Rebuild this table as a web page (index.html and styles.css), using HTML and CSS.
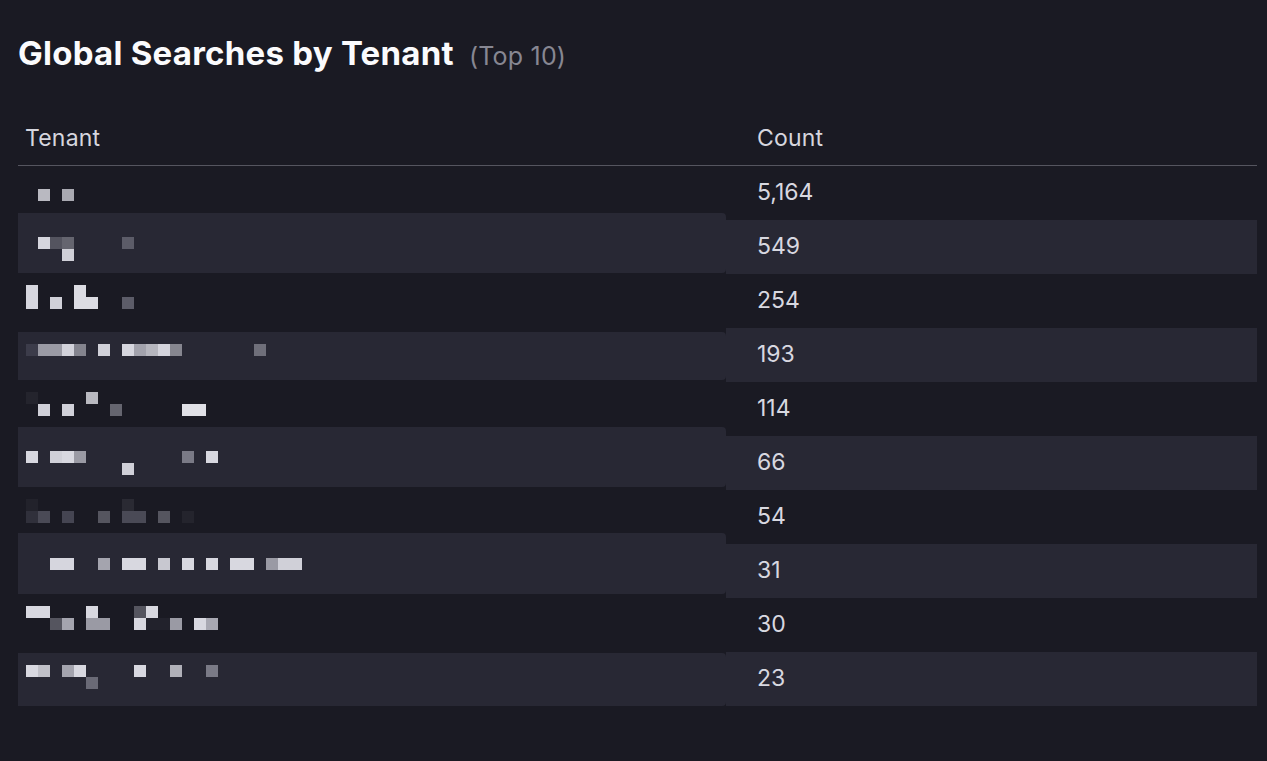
FILE: index.html
```html
<!DOCTYPE html>
<html lang="en">
<head>
<meta charset="utf-8">
<title>Global Searches by Tenant</title>
<link rel="stylesheet" href="styles.css">
</head>
<body>
<main class="panel">
  <h1 class="title">Global Searches by Tenant <span class="sub">(Top 10)</span></h1>
  <div class="table">
    <div class="col col-tenant">
      <div class="th">Tenant</div>
      <div class="td t1"><svg class="pix" width="320" height="47" viewBox="0 0 320 47"><rect x="12" y="23" width="12" height="12" fill="#b9b9c1"/><rect x="36" y="23" width="12" height="12" fill="#a9a9b1"/></svg></div>
      <div class="td t2 alt"><svg class="pix" width="320" height="60" viewBox="0 0 320 60"><rect x="12" y="24" width="12" height="12" fill="#d6d6de"/><rect x="24" y="24" width="12" height="12" fill="#54545f"/><rect x="36" y="24" width="12" height="12" fill="#65656f"/><rect x="96" y="24" width="12" height="12" fill="#5c5c68"/><rect x="36" y="36" width="12" height="12" fill="#d0d0d8"/></svg></div>
      <div class="td t3"><svg class="pix" width="320" height="59" viewBox="0 0 320 59"><rect x="0" y="12" width="12" height="24" fill="#d6d6de"/><rect x="24" y="24" width="12" height="12" fill="#d0d0d8"/><rect x="48" y="12" width="12" height="24" fill="#dcdce3"/><rect x="60" y="24" width="12" height="12" fill="#dcdce3"/><rect x="96" y="24" width="12" height="12" fill="#5c5c68"/></svg></div>
      <div class="td t4 alt"><svg class="pix" width="320" height="48" viewBox="0 0 320 48"><rect x="0" y="12" width="12" height="12" fill="#3c3c4a"/><rect x="12" y="12" width="24" height="12" fill="#9a9aa4"/><rect x="36" y="12" width="12" height="12" fill="#d2d2da"/><rect x="48" y="12" width="12" height="12" fill="#84848e"/><rect x="72" y="12" width="12" height="12" fill="#d0d0d8"/><rect x="96" y="12" width="12" height="12" fill="#d6d6de"/><rect x="108" y="12" width="12" height="12" fill="#a2a2ac"/><rect x="120" y="12" width="12" height="12" fill="#b6b6be"/><rect x="132" y="12" width="12" height="12" fill="#d4d4dc"/><rect x="144" y="12" width="12" height="12" fill="#86868f"/><rect x="228" y="12" width="12" height="12" fill="#6f6f7a"/></svg></div>
      <div class="td t5"><svg class="pix" width="320" height="47" viewBox="0 0 320 47"><rect x="0" y="12" width="12" height="12" fill="#24242d"/><rect x="60" y="12" width="12" height="12" fill="#b9b9c0"/><rect x="12" y="24" width="12" height="12" fill="#d0d0d8"/><rect x="36" y="24" width="12" height="12" fill="#d0d0d8"/><rect x="84" y="24" width="12" height="12" fill="#65656f"/><rect x="156" y="24" width="24" height="12" fill="#e0e0e6"/></svg></div>
      <div class="td t6 alt"><svg class="pix" width="320" height="60" viewBox="0 0 320 60"><rect x="0" y="24" width="12" height="12" fill="#d8d8e0"/><rect x="24" y="24" width="12" height="12" fill="#d0d0d8"/><rect x="36" y="24" width="12" height="12" fill="#d8d8e0"/><rect x="48" y="24" width="12" height="12" fill="#9a9aa4"/><rect x="156" y="24" width="12" height="12" fill="#7a7a86"/><rect x="180" y="24" width="12" height="12" fill="#d8d8e0"/><rect x="96" y="36" width="12" height="12" fill="#d0d0d8"/></svg></div>
      <div class="td t7"><svg class="pix" width="320" height="46" viewBox="0 0 320 46"><rect x="0" y="12" width="12" height="12" fill="#22222b"/><rect x="96" y="12" width="12" height="12" fill="#2a2a33"/><rect x="0" y="24" width="12" height="12" fill="#30303b"/><rect x="12" y="24" width="12" height="12" fill="#4a4a56"/><rect x="36" y="24" width="12" height="12" fill="#454552"/><rect x="72" y="24" width="12" height="12" fill="#55555f"/><rect x="96" y="24" width="24" height="12" fill="#4a4a56"/><rect x="132" y="24" width="12" height="12" fill="#55555f"/><rect x="156" y="24" width="12" height="12" fill="#24242d"/></svg></div>
      <div class="td t8 alt"><svg class="pix" width="320" height="61" viewBox="0 0 320 61"><rect x="24" y="25" width="24" height="12" fill="#d6d6de"/><rect x="72" y="25" width="12" height="12" fill="#a4a4ae"/><rect x="96" y="25" width="24" height="12" fill="#d8d8e0"/><rect x="132" y="25" width="12" height="12" fill="#c8c8d0"/><rect x="156" y="25" width="12" height="12" fill="#d8d8e0"/><rect x="180" y="25" width="12" height="12" fill="#d8d8e0"/><rect x="204" y="25" width="24" height="12" fill="#d8d8e0"/><rect x="240" y="25" width="12" height="12" fill="#9a9aa4"/><rect x="252" y="25" width="24" height="12" fill="#d0d0d8"/></svg></div>
      <div class="td t9"><svg class="pix" width="320" height="59" viewBox="0 0 320 59"><rect x="0" y="12" width="24" height="12" fill="#d8d8e0"/><rect x="60" y="12" width="12" height="12" fill="#d8d8e0"/><rect x="108" y="12" width="12" height="12" fill="#55555f"/><rect x="120" y="12" width="12" height="12" fill="#d8d8e0"/><rect x="24" y="24" width="12" height="12" fill="#55555f"/><rect x="36" y="24" width="12" height="12" fill="#a4a4ae"/><rect x="60" y="24" width="24" height="12" fill="#9a9aa4"/><rect x="108" y="24" width="12" height="12" fill="#d8d8e0"/><rect x="120" y="24" width="24" height="12" fill="#22222c"/><rect x="144" y="24" width="12" height="12" fill="#9a9aa4"/><rect x="168" y="24" width="12" height="12" fill="#d8d8e0"/><rect x="180" y="24" width="12" height="12" fill="#a8a8b2"/></svg></div>
      <div class="td t10 alt"><svg class="pix" width="320" height="53" viewBox="0 0 320 53"><rect x="0" y="12" width="12" height="12" fill="#d8d8e0"/><rect x="12" y="12" width="12" height="12" fill="#c0c0c8"/><rect x="36" y="12" width="12" height="12" fill="#a4a4ae"/><rect x="48" y="12" width="12" height="12" fill="#d8d8e0"/><rect x="108" y="12" width="12" height="12" fill="#d8d8e0"/><rect x="144" y="12" width="12" height="12" fill="#b0b0b8"/><rect x="180" y="12" width="12" height="12" fill="#7a7a86"/><rect x="60" y="24" width="12" height="12" fill="#6a6a76"/></svg></div>
    </div>
    <div class="col col-count">
      <div class="th">Count</div>
      <div class="td num">5,164</div>
      <div class="td num alt">549</div>
      <div class="td num">254</div>
      <div class="td num alt">193</div>
      <div class="td num">114</div>
      <div class="td num alt">66</div>
      <div class="td num">54</div>
      <div class="td num alt">31</div>
      <div class="td num">30</div>
      <div class="td num alt">23</div>
    </div>
  </div>
</main>
</body>
</html>
```

FILE: styles.css
```css
* { box-sizing: border-box; }

html, body {
  margin: 0;
  padding: 0;
  background: #1a1a23;
  height: 100%;
}

body {
  font-family: Inter, Lato, "Liberation Sans", sans-serif;
  color: #d6d6de;
}

.panel {
  padding: 30px 10px 0 18px;
}

.title {
  margin: 0;
  font-size: 33px;
  font-weight: 700;
  line-height: 46px;
  letter-spacing: 0.25px;
  color: #fbfbfd;
  display: flex;
  align-items: baseline;
  gap: 15px;
}

.sub {
  font-size: 25px;
  font-weight: 400;
  letter-spacing: 0.2px;
  color: #878792;
}

.table {
  margin-top: 31px;
  display: flex;
}

.col {
  display: flex;
  flex-direction: column;
}

.col-tenant { width: 708px; }
.col-count { flex: 1; }

.th {
  height: 56px;
  border-bottom: 1px solid #55555f;
  font-size: 23px;
  line-height: 56px;
  letter-spacing: 0.2px;
  color: #d6d6de;
}

.col-tenant .th { padding-left: 7px; }
.col-count .th { padding-left: 31px; }

.td { background: #1a1a23; }
.td.alt { background: #282834; }

.col-tenant .td { padding-left: 8px; display: flex; }
.col-tenant .td.alt { border-radius: 0 4px 4px 0; }
.pix { display: block; }

.t1 { height: 47px; }
.t2 { height: 60px; }
.t3 { height: 59px; }
.t4 { height: 48px; }
.t5 { height: 47px; }
.t6 { height: 60px; }
.t7 { height: 46px; }
.t8 { height: 61px; }
.t9 { height: 59px; }
.t10 { height: 53px; }

.num {
  height: 54px;
  line-height: 52px;
  padding-left: 31px;
  font-size: 23px;
  color: #d8d8e0;
}
```
